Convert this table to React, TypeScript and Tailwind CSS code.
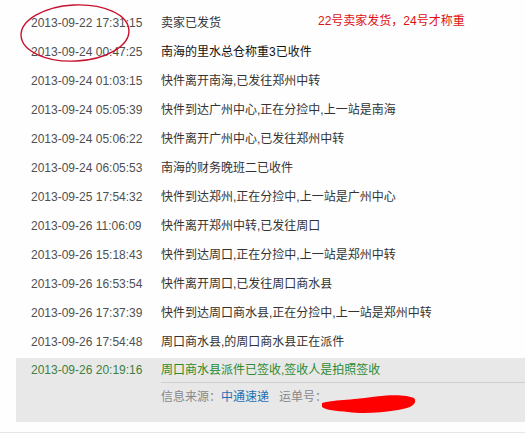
const rows: [string, string][] = [
  ['2013-09-22 17:31:15', '卖家已发货'],
  ['2013-09-24 00:47:25', '南海的里水总仓称重3已收件'],
  ['2013-09-24 01:03:15', '快件离开南海,已发往郑州中转'],
  ['2013-09-24 05:05:39', '快件到达广州中心,正在分捡中,上一站是南海'],
  ['2013-09-24 05:06:22', '快件离开广州中心,已发往郑州中转'],
  ['2013-09-24 06:05:53', '南海的财务晚班二已收件'],
  ['2013-09-25 17:54:32', '快件到达郑州,正在分捡中,上一站是广州中心'],
  ['2013-09-26 11:06:09', '快件离开郑州中转,已发往周口'],
  ['2013-09-26 15:18:43', '快件到达周口,正在分捡中,上一站是郑州中转'],
  ['2013-09-26 16:53:54', '快件离开周口,已发往周口商水县'],
  ['2013-09-26 17:37:39', '快件到达周口商水县,正在分捡中,上一站是郑州中转'],
  ['2013-09-26 17:54:48', '周口商水县,的周口商水县正在派件'],
]

export default function App() {
  return (
    <div
      className="relative w-[525px] h-[437px] bg-[#fefefe] overflow-hidden text-[12px]"
      style={{ fontFamily: '"Liberation Sans", "Noto Sans CJK SC", sans-serif' }}
    >
      <div className="pt-[8px] ml-[16px]">
        {rows.map(([time, text], i) => (
          <div key={time} className="flex items-center h-[29px] pl-[15px]">
            <span className="w-[130px] text-[#505050]">{time}</span>
            <span className={i === 1 ? 'text-[#111]' : 'text-[#333]'}>{text}</span>
          </div>
        ))}

        <div className="mt-[2px] bg-[#e8e8e8] h-[64px] pl-[15px]">
          <div className="flex items-center h-[24px]">
            <span className="w-[130px] text-[#3f7f3f]">2013-09-26 20:19:16</span>
            <span className="text-[#2e8a2e]">周口商水县派件已签收,签收人是拍照签收</span>
          </div>
          <div className="ml-[130px] border-t border-[#cfcfcf] flex items-center h-[28px] text-[#888]">
            <span>信息来源：</span>
            <span className="text-[#1e6fb3]">中通速递</span>
            <span className="ml-[10px]">运单号：</span>
          </div>
        </div>
      </div>

      <div className="mt-[10px] border-t border-[#e6e6e6]" />

      {/* hand-drawn annotations */}
      <div className="absolute left-[318px] top-[12px] text-[#e01010]">22号卖家发货，24号才称重</div>

      <svg className="absolute left-0 top-0" width="525" height="437">
        <ellipse
          cx="75"
          cy="33"
          rx="54"
          ry="28"
          fill="none"
          stroke="#c8102e"
          strokeWidth="1.4"
          transform="rotate(-3 75 33)"
        />
        <path
          d="M322 403 C332 400 352 400 372 397 C392 394 408 395 414 398 C418 403 412 408 398 410 C380 413 362 414 348 412 C336 411 326 410 322 407 Z"
          fill="#ff0000"
        />
      </svg>
    </div>
  )
}
